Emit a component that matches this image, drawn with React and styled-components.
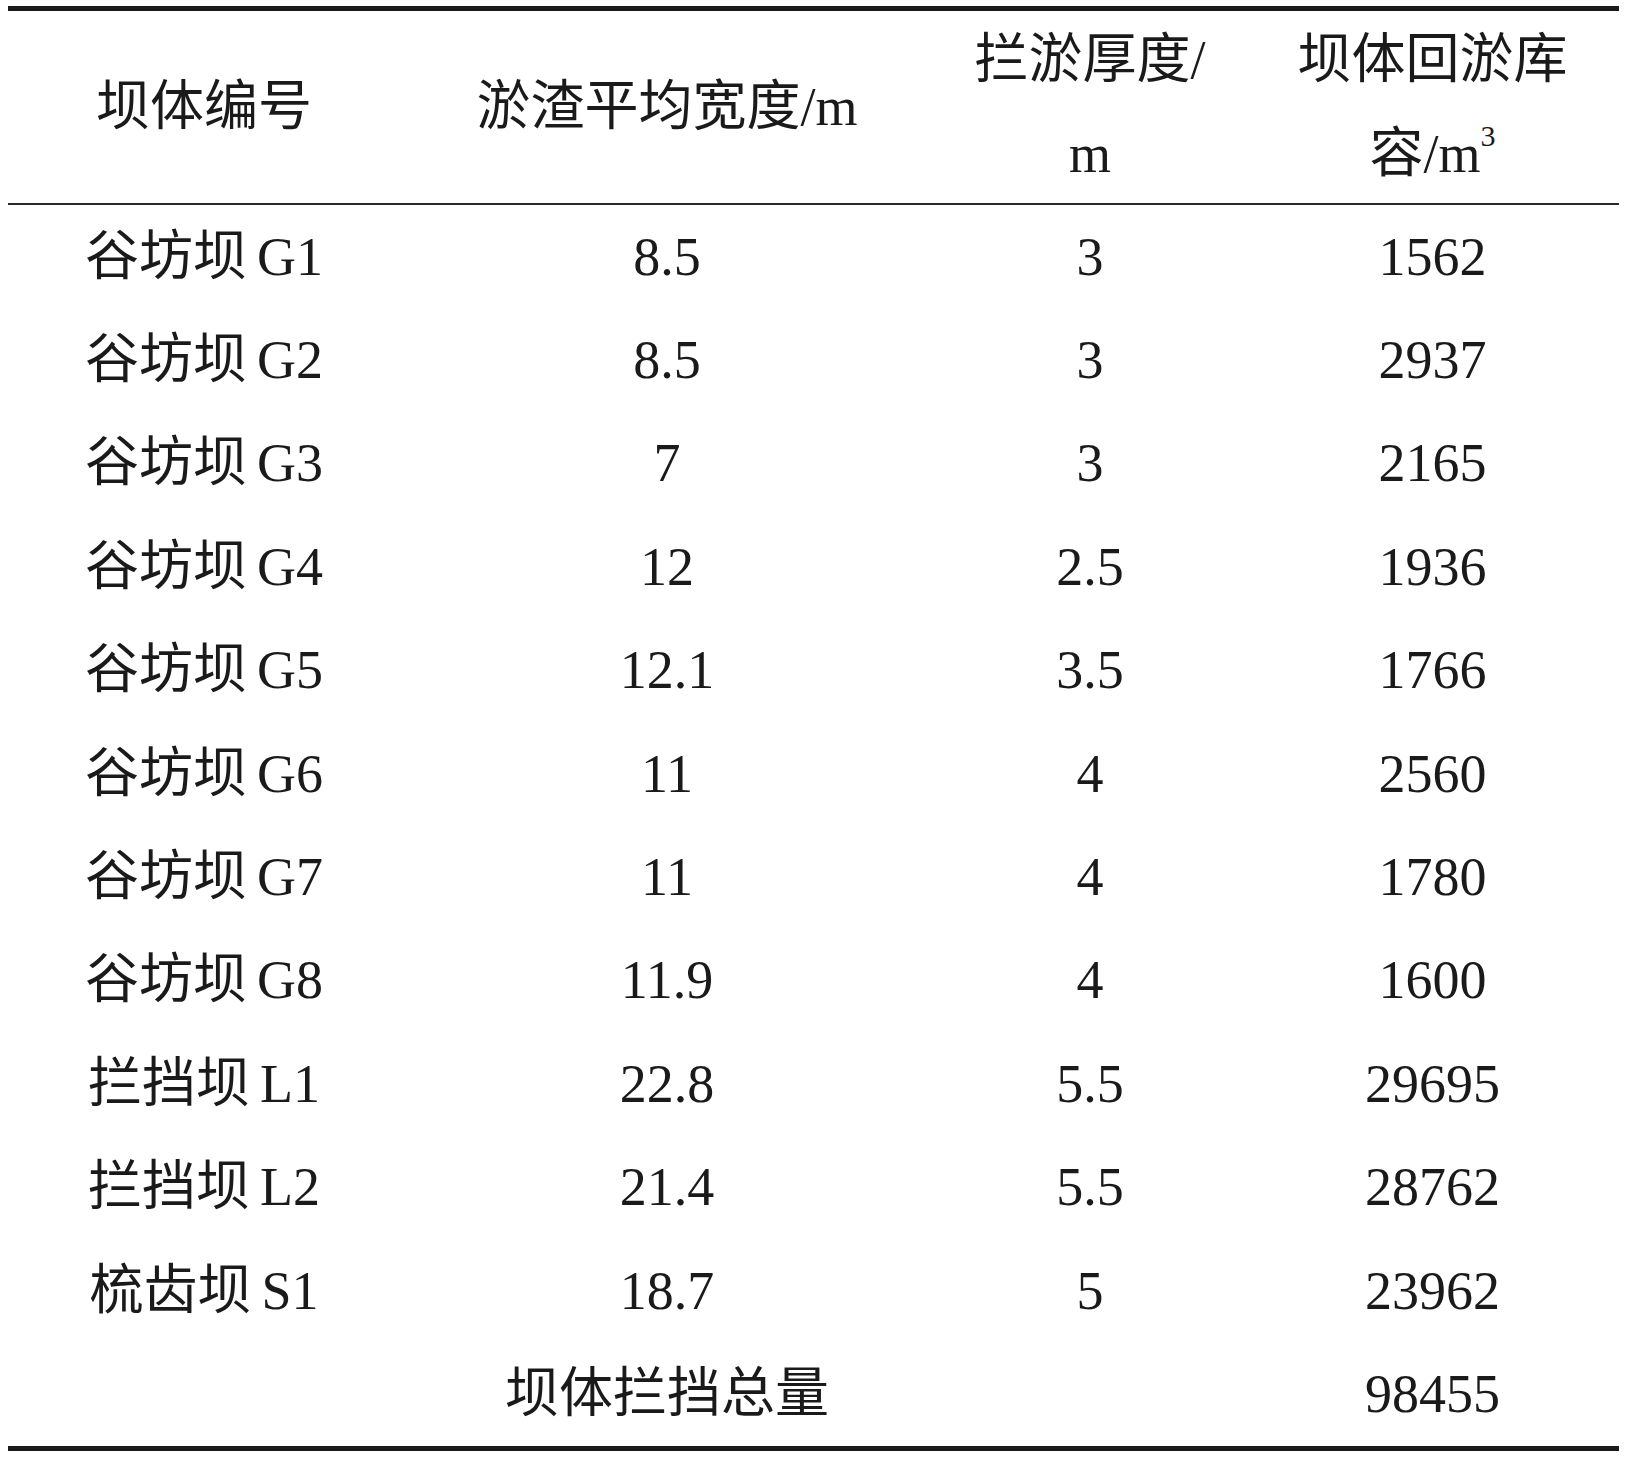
import React from "react";
import styled, { createGlobalStyle } from "styled-components";

const GlobalStyle = createGlobalStyle`
    html, body {
        margin: 0;
        padding: 0;
        background: #ffffff;
    }
    body {
        font-family: "Liberation Serif", "Noto Sans CJK SC", serif;
        color: #1a1a1a;
    }
`;

const Page = styled.div`
    padding: 6px 12px 9px 8px;
    width: 1611px;
`;

const Table = styled.div`
    border-top: 5px solid #1a1a1a;
    border-bottom: 5px solid #1a1a1a;
`;

const Row = styled.div`
    display: grid;
    grid-template-columns: 392px 534px 312px 1fr;
    height: ${(p) => p.$height || 103.4}px;
    border-bottom: ${(p) => (p.$rule ? "2.5px solid #2a2a2a" : "none")};
`;

const Cell = styled.div`
    display: flex;
    align-items: center;
    justify-content: center;
    text-align: center;
    font-size: 54px;
    line-height: ${(p) => p.$lh || 60}px;
    white-space: nowrap;
`;

const Code = styled.span`
    margin-left: 10px;
`;

const Sup = styled.sup`
    font-size: 30px;
    line-height: 0;
    vertical-align: 0;
    position: relative;
    top: -26px;
`;

const rows = [
    ["谷坊坝", "G1", "8.5", "3", "1562"],
    ["谷坊坝", "G2", "8.5", "3", "2937"],
    ["谷坊坝", "G3", "7", "3", "2165"],
    ["谷坊坝", "G4", "12", "2.5", "1936"],
    ["谷坊坝", "G5", "12.1", "3.5", "1766"],
    ["谷坊坝", "G6", "11", "4", "2560"],
    ["谷坊坝", "G7", "11", "4", "1780"],
    ["谷坊坝", "G8", "11.9", "4", "1600"],
    ["拦挡坝", "L1", "22.8", "5.5", "29695"],
    ["拦挡坝", "L2", "21.4", "5.5", "28762"],
    ["梳齿坝", "S1", "18.7", "5", "23962"],
];

const App = () => {
    return (
        <Page>
            <GlobalStyle />
            <Table>
                <Row $height={192} $rule>
                    <Cell>坝体编号</Cell>
                    <Cell>淤渣平均宽度/m</Cell>
                    <Cell $lh={94}>
                        <span>
                            拦淤厚度/
                            <br />m
                        </span>
                    </Cell>
                    <Cell $lh={94}>
                        <span>
                            坝体回淤库
                            <br />
                            容/m<Sup>3</Sup>
                        </span>
                    </Cell>
                </Row>
                {rows.map(([kind, code, width, depth, volume]) => (
                    <Row key={code}>
                        <Cell>
                            <span>
                                {kind}
                                <Code>{code}</Code>
                            </span>
                        </Cell>
                        <Cell>{width}</Cell>
                        <Cell>{depth}</Cell>
                        <Cell>{volume}</Cell>
                    </Row>
                ))}
                <Row>
                    <Cell />
                    <Cell>坝体拦挡总量</Cell>
                    <Cell />
                    <Cell>98455</Cell>
                </Row>
            </Table>
        </Page>
    );
};

export default App;
